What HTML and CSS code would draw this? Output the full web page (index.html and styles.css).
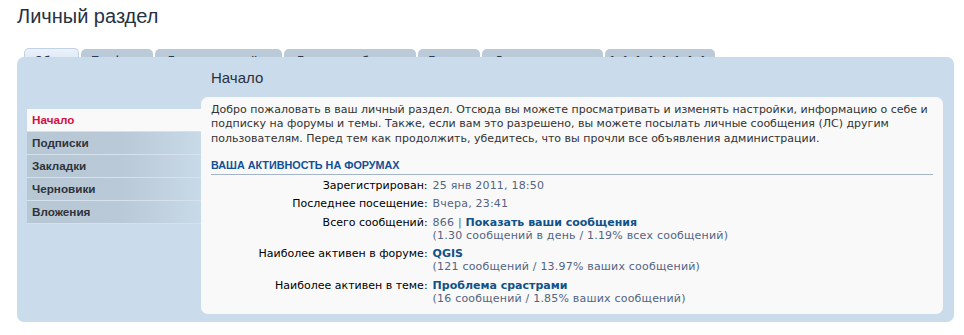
FILE: index.html
```html
<!DOCTYPE html>
<html lang="ru">
<head>
  <meta charset="UTF-8">
  <title>Личный раздел</title>
  <link rel="stylesheet" href="styles.css">
</head>
<body>
  <h1 class="page-title">Личный раздел</h1>

  <ul class="tabs">
    <li class="tab active">Обзор</li>
    <li class="tab">Профиль</li>
    <li class="tab">Личные настройки</li>
    <li class="tab">Личные сообщения</li>
    <li class="tab">Группы</li>
    <li class="tab">Друзья и недруги</li>
    <li class="tab tab-last">АААААААА</li>
  </ul>

  <div class="panel">
    <ul class="side-menu">
      <li class="active"><a href="#">Начало</a></li>
      <li><a href="#">Подписки</a></li>
      <li><a href="#">Закладки</a></li>
      <li><a href="#">Черновики</a></li>
      <li><a href="#">Вложения</a></li>
    </ul>

    <div class="main">
      <h2>Начало</h2>
      <div class="box">
        <p>Добро пожаловать в ваш личный раздел. Отсюда вы можете просматривать и изменять настройки, информацию о себе и подписку на форумы и темы. Также, если вам это разрешено, вы можете посылать личные сообщения (ЛС) другим пользователям. Перед тем как продолжить, убедитесь, что вы прочли все объявления администрации.</p>

        <h3>Ваша активность на форумах</h3>
        <dl class="details">
          <dt>Зарегистрирован:</dt>
          <dd>25 янв 2011, 18:50</dd>

          <dt>Последнее посещение:</dt>
          <dd>Вчера, 23:41</dd>

          <dt>Всего сообщений:</dt>
          <dd>866 | <a href="#">Показать ваши сообщения</a><br>(1.30 сообщений в день / 1.19% всех сообщений)</dd>

          <dt>Наиболее активен в форуме:</dt>
          <dd><a href="#">QGIS</a><br>(121 сообщений / 13.97% ваших сообщений)</dd>

          <dt>Наиболее активен в теме:</dt>
          <dd><a href="#">Проблема срастрами</a><br>(16 сообщений / 1.85% ваших сообщений)</dd>
        </dl>
      </div>
    </div>
  </div>
</body>
</html>
```

FILE: styles.css
```css
body {
  margin: 0;
  padding: 0 10px 0 17px;
  background: #fff;
  font-family: "DejaVu Sans", Verdana, sans-serif;
  color: #333;
}
a {
  text-decoration: none;
}
.page-title {
  margin: 0;
  padding-top: 4px;
  font-family: "Liberation Sans", Arial, sans-serif;
  font-size: 20px;
  line-height: 24px;
  font-weight: normal;
  color: #28313f;
}

/* tabs - only the tops show above the panel */
.tabs {
  list-style: none;
  margin: 20px 0 0;
  padding: 0 0 0 7px;
  height: 9px;
  overflow: hidden;
  display: grid;
  grid-template-columns: 55px 72px 127px 132px 62px 121px 110px;
  column-gap: 2px;
  align-items: start;
}
.tab {
  margin-top: 1px;
  height: 20px;
  padding-top: 5px;
  box-sizing: border-box;
  background: #bacad8;
  border-radius: 5px 5px 0 0;
  font-family: "Liberation Sans", Arial, sans-serif;
  font-size: 11px;
  line-height: 12px;
  font-weight: bold;
  color: #2d3a50;
  text-align: center;
  white-space: nowrap;
  overflow: hidden;
}
.tab.active {
  margin-top: 0;
  background: linear-gradient(#eaf2fb, #d5e3f1);
  border: 1px solid #c2d2e2;
  border-bottom: none;
}
.tab-last {
  letter-spacing: 5px;
}

.panel {
  display: flex;
  width: 937px;
  box-sizing: border-box;
  padding: 0 11px 8px 10px;
  background: #cadceb;
  border-radius: 7px;
}

.side-menu {
  list-style: none;
  margin: 52px 0 0;
  padding: 0;
  width: 174px;
  flex-shrink: 0;
}
.side-menu li {
  border-bottom: 1px solid #d5e1ec;
}
.side-menu a {
  display: block;
  height: 22px;
  padding-left: 5px;
  background: linear-gradient(to right, #b7c7d4, #b9c9d7 55%, #c8d9e8);
  font-family: "Liberation Sans", Arial, sans-serif;
  font-size: 11.7px;
  line-height: 22px;
  font-weight: bold;
  color: #2f333a;
}
.side-menu li.active a {
  background: #f9f9f9;
  color: #d31141;
}

.main {
  flex: 1;
}
.main h2 {
  margin: 11px 0 9px 10px;
  font-family: "Liberation Sans", Arial, sans-serif;
  font-size: 15px;
  line-height: 20px;
  font-weight: normal;
  color: #28313f;
}
.box {
  padding: 6px 10px 6.5px;
  background: #f9f9f9;
  border-radius: 7px;
}
.box p {
  margin: 0;
  font-size: 11px;
  line-height: 14.3px;
  color: #333;
}
.box h3 {
  margin: 12px 0 0;
  padding-bottom: 2px;
  border-bottom: 1px solid #a4b5c6;
  font-family: "Liberation Sans", Arial, sans-serif;
  font-size: 10.8px;
  line-height: 14px;
  font-weight: bold;
  text-transform: uppercase;
  color: #115098;
}

.details {
  display: grid;
  grid-template-columns: 30% 1fr;
  column-gap: 5px;
  margin: 1px 0 0;
  font-size: 11px;
  line-height: 13px;
}
.details dt,
.details dd {
  margin: 0;
  padding: 3px 0 2.5px;
}
.details dt {
  text-align: right;
  color: #000;
}
.details dd {
  color: #536482;
  letter-spacing: 0.2px;
}
.details a {
  font-weight: bold;
  color: #105289;
  letter-spacing: 0;
}
```
